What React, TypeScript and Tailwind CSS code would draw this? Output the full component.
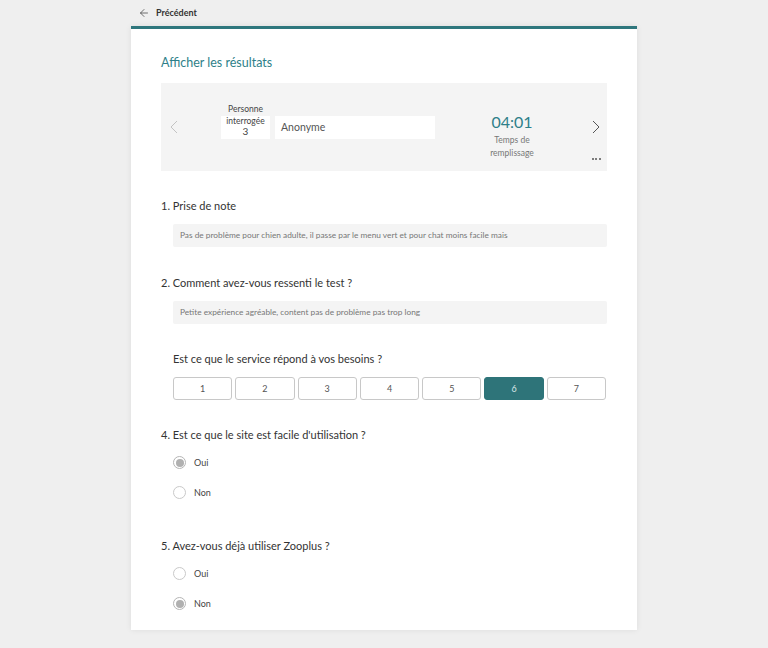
import { ArrowLeft } from "lucide-react";

const font = { fontFamily: 'Lato, "Open Sans", sans-serif' };

function Radio({ label, checked }: { label: string; checked?: boolean }) {
  return (
    <div className="flex items-center h-[15px] ml-[12px]">
      <span
        className={
          "w-[13px] h-[13px] rounded-full border flex items-center justify-center " +
          (checked ? "border-[#b5b5b5]" : "border-[#c9c9c9]")
        }
      >
        {checked && <span className="w-[8px] h-[8px] rounded-full bg-[#b0b0b0]" />}
      </span>
      <span className="ml-[8px] text-[9px] text-[#444]">{label}</span>
    </div>
  );
}

function Answer({ text }: { text: string }) {
  return (
    <div className="ml-[12px] w-[434px] h-[23px] bg-[#f4f4f4] rounded-[2px] flex items-center pl-[7px] text-[8.3px] text-[#777]">
      {text}
    </div>
  );
}

export default function App() {
  const scale = [1, 2, 3, 4, 5, 6, 7];

  return (
    <div className="min-h-[648px] bg-[#efefef]" style={font}>
      {/* top bar */}
      <div className="w-[506px] mx-auto h-[26px] flex items-center pl-[7px]">
        <ArrowLeft size={12} strokeWidth={1.5} className="text-[#444]" />
        <span className="ml-[6px] text-[9px] font-bold text-[#333]">Précédent</span>
      </div>

      <div className="w-[506px] mx-auto bg-white border-t-[3px] border-[#2f777d] shadow-[0_0_6px_rgba(0,0,0,0.08)] px-[30px] pt-[25px] pb-[19px]">
        <h1 className="text-[12.5px] leading-[18px] text-[#2e7f89]">Afficher les résultats</h1>

        {/* respondent box */}
        <div className="mt-[11px] h-[88px] bg-[#f4f4f4] flex items-start">
          <svg width="8" height="14" viewBox="0 0 8 14" className="mt-[37px] ml-[9px]">
            <path d="M7 1L1 7l6 6" fill="none" stroke="#c3c3c3" strokeWidth="1" />
          </svg>

          <div className="mt-[19px] ml-[43px] w-[49px] flex flex-col items-center">
            <span className="text-[8.5px] leading-[14px] text-[#444]">Personne</span>
            <div className="w-[49px] h-[23px] bg-white flex flex-col items-center text-[#444]">
              <span className="text-[8.5px] leading-[9px] mt-[1px]">interrogée</span>
              <span className="text-[10px] leading-[10px]">3</span>
            </div>
          </div>

          <div className="mt-[33px] ml-[5px] w-[160px] h-[23px] bg-white flex items-center pl-[6px] text-[10.5px] text-[#555]">
            Anonyme
          </div>

          <div className="mt-[28px] ml-[47px] w-[60px] flex flex-col items-center">
            <span className="text-[16px] leading-[22px] text-[#2e7f89]">04:01</span>
            <span className="text-[8.5px] leading-[13px] text-[#777] mt-[1px]">Temps de</span>
            <span className="text-[8.5px] leading-[13px] text-[#777]">remplissage</span>
          </div>

          <div className="mt-[37px] ml-[49px] w-[10px] flex flex-col items-center">
            <svg width="8" height="14" viewBox="0 0 8 14">
              <path d="M1 1l6 6-6 6" fill="none" stroke="#555" strokeWidth="1" />
            </svg>
            <div className="mt-[24px] flex gap-[1.5px]">
              <span className="w-[2px] h-[2px] rounded-full bg-[#555]" />
              <span className="w-[2px] h-[2px] rounded-full bg-[#555]" />
              <span className="w-[2px] h-[2px] rounded-full bg-[#555]" />
            </div>
          </div>
        </div>

        {/* 1 */}
        <p className="mt-[27px] text-[11px] leading-[15px] text-[#333]">1. Prise de note</p>
        <div className="mt-[11px]">
          <Answer text="Pas de problème pour chien adulte, il passe par le menu vert et pour chat moins facile mais" />
        </div>

        {/* 2 */}
        <p className="mt-[28px] text-[11px] leading-[15px] text-[#333]">2. Comment avez-vous ressenti le test ?</p>
        <div className="mt-[11px]">
          <Answer text="Petite expérience agréable, content pas de problème pas trop long" />
        </div>

        <p className="mt-[27px] ml-[12px] text-[11px] leading-[15px] text-[#333]">
          Est ce que le service répond à vos besoins ?
        </p>
        <div className="mt-[11px] ml-[12px] w-[433px] grid grid-cols-7 gap-[3px]">
          {scale.map((n) => (
            <div
              key={n}
              className={
                "h-[23px] rounded-[3px] flex items-center justify-center text-[9px] " +
                (n === 6
                  ? "bg-[#2e7479] border border-[#2e7479] text-[#d6e6e7]"
                  : "bg-white border border-[#c8c8c8] text-[#555]")
              }
            >
              {n}
            </div>
          ))}
        </div>

        {/* 4 */}
        <p className="mt-[27px] text-[11px] leading-[15px] text-[#333]">
          4. Est ce que le site est facile d'utilisation ?
        </p>
        <div className="mt-[13px]">
          <Radio label="Oui" checked />
        </div>
        <div className="mt-[15px]">
          <Radio label="Non" />
        </div>

        {/* 5 */}
        <p className="mt-[38px] text-[11px] leading-[15px] text-[#333]">5. Avez-vous déjà utiliser Zooplus ?</p>
        <div className="mt-[13px]">
          <Radio label="Oui" />
        </div>
        <div className="mt-[15px]">
          <Radio label="Non" checked />
        </div>
      </div>
    </div>
  );
}
